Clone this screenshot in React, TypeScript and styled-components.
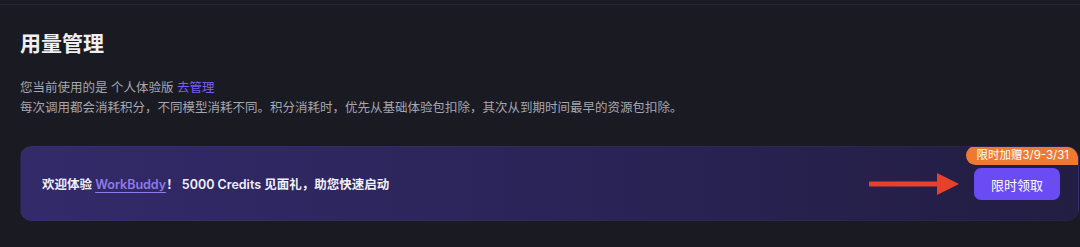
import React from "react";
import styled, { createGlobalStyle } from "styled-components";

const Global = createGlobalStyle`
  html, body { margin: 0; padding: 0; background: #1a1a23; }
  body { font-family: "Inter", "Noto Sans CJK SC", sans-serif; }
`;

const Page = styled.div`
  width: 1080px;
  height: 247px;
  box-sizing: border-box;
  background: #1a1a23;
  border-top: 4px solid #1a1a23;
  display: flex;
  flex-direction: column;
  overflow: hidden;
`;

const TopLine = styled.div`
  height: 1px;
  background: #262631;
`;

const Content = styled.div`
  padding: 23px 1px 0 20px;
  display: flex;
  flex-direction: column;
`;

const Title = styled.h1`
  margin: 0;
  font-size: 21px;
  line-height: 28px;
  font-weight: 700;
  color: #f0f0f2;
  font-family: "Noto Sans CJK SC", sans-serif;
`;

const Desc = styled.div`
  margin-top: 22px;
  font-size: 12.5px;
  line-height: 20px;
  color: #a6a6ae;
  font-family: "Inter", "Noto Sans CJK SC", sans-serif;
`;

const Link = styled.a`
  color: #7a5cf2;
  text-decoration: none;
  cursor: pointer;
`;

const Banner = styled.div`
  position: relative;
  margin-top: 28px;
  height: 75px;
  box-sizing: border-box;
  border-radius: 12px;
  background: linear-gradient(90deg, #332a6a 0%, #2b2458 50%, #221d42 100%);
  border: 1px solid rgba(255, 255, 255, 0.025);
  display: flex;
  align-items: center;
  justify-content: space-between;
  padding: 0 18px 0 21px;
  overflow: hidden;
`;

const BannerText = styled.div`
  font-size: 12.5px;
  font-weight: 600;
  color: #f1f0f7;
  font-family: "Inter", "Noto Sans CJK SC", sans-serif;
`;

const Brand = styled.a`
  color: #8f7ae8;
  text-decoration: underline;
  text-underline-offset: 3px;
  text-decoration-thickness: 1px;
  cursor: pointer;
`;

const Actions = styled.div`
  display: flex;
  align-items: center;
  gap: 15px;
`;

const Badge = styled.div`
  position: absolute;
  top: -1px;
  right: 0;
  height: 19px;
  padding: 0 9px 0 10px;
  background: #ee7a32;
  color: #fff;
  font-size: 11.5px;
  line-height: 19px;
  border-radius: 10px 12px 0 10px;
  font-family: "Inter", "Noto Sans CJK SC", sans-serif;
`;

const ClaimButton = styled.button`
  width: 86px;
  height: 32px;
  border: none;
  border-radius: 7px;
  background: #6b4cf4;
  color: #fff;
  font-size: 13px;
  font-family: "Noto Sans CJK SC", sans-serif;
  cursor: pointer;
  padding: 0;
  margin-top: 1px;
`;

const Arrow = () => (
  <svg width="90" height="22" viewBox="0 0 90 22">
    <rect x="0" y="8.5" width="69" height="5" fill="#e8412b" />
    <polygon points="68,0 90,11 68,22" fill="#e8412b" />
  </svg>
);

export default function App() {
  return (
    <>
      <Global />
      <Page>
        <TopLine />
        <Content>
          <Title>用量管理</Title>
          <Desc>
            <div>
              您当前使用的是 个人体验版 <Link>去管理</Link>
            </div>
            <div>
              每次调用都会消耗积分，不同模型消耗不同。积分消耗时，优先从基础体验包扣除，其次从到期时间最早的资源包扣除。
            </div>
          </Desc>
          <Banner>
            <BannerText>
              欢迎体验 <Brand>WorkBuddy</Brand>！ 5000 Credits 见面礼，助您快速启动
            </BannerText>
            <Actions>
              <Arrow />
              <ClaimButton>限时领取</ClaimButton>
            </Actions>
            <Badge>限时加赠3/9-3/31</Badge>
          </Banner>
        </Content>
      </Page>
    </>
  );
}
